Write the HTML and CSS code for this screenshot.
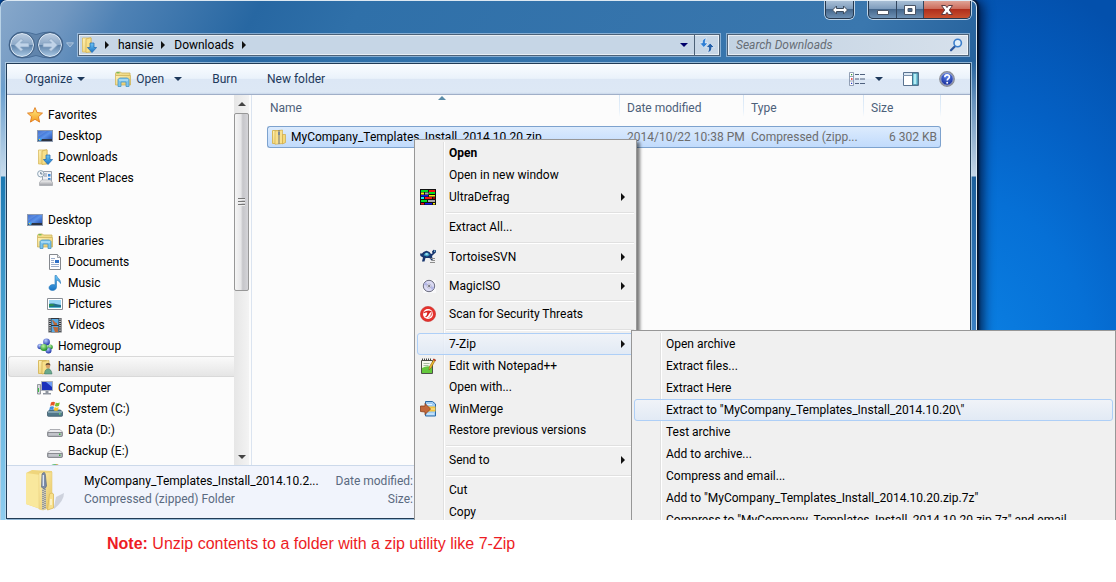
FILE: index.html
```html
<!DOCTYPE html>
<html lang="en">
<head>
<meta charset="utf-8">
<title>Downloads</title>
<link rel="stylesheet" href="styles.css">
</head>
<body>
<svg class="sprite" aria-hidden="true">
  <defs>
    <linearGradient id="gFolder" x1="0" y1="0" x2="1" y2="1"><stop offset="0" stop-color="#fff3b8"/><stop offset="1" stop-color="#e6c35c"/></linearGradient>
    <linearGradient id="gBlue" x1="0" y1="0" x2="0" y2="1"><stop offset="0" stop-color="#6fc6f5"/><stop offset="1" stop-color="#1672c4"/></linearGradient>
    <linearGradient id="gScreen" x1="0" y1="0" x2="1" y2="1"><stop offset="0" stop-color="#1c47b5"/><stop offset=".5" stop-color="#5c93ea"/><stop offset="1" stop-color="#1740a4"/></linearGradient>
    <linearGradient id="gGrey" x1="0" y1="0" x2="0" y2="1"><stop offset="0" stop-color="#fafafa"/><stop offset="1" stop-color="#9a9ca2"/></linearGradient>
    <linearGradient id="gStar" x1="0" y1="0" x2="0" y2="1"><stop offset="0" stop-color="#fff08a"/><stop offset="1" stop-color="#f59a1c"/></linearGradient>
    <linearGradient id="gGlass" x1="0" y1="0" x2="0" y2="1"><stop offset="0" stop-color="#b9cbe0"/><stop offset=".48" stop-color="#8da9c8"/><stop offset=".52" stop-color="#5f83aa"/><stop offset="1" stop-color="#a9c8e4"/></linearGradient>
    <radialGradient id="gHelp" cx=".5" cy=".3" r=".7"><stop offset="0" stop-color="#5c86f0"/><stop offset="1" stop-color="#0c1f8c"/></radialGradient>
    <radialGradient id="gBallB" cx=".4" cy=".3" r=".7"><stop offset="0" stop-color="#b9ccff"/><stop offset="1" stop-color="#1d34a8"/></radialGradient>
    <radialGradient id="gBallG" cx=".4" cy=".3" r=".7"><stop offset="0" stop-color="#baf5a6"/><stop offset="1" stop-color="#178a1c"/></radialGradient>
  </defs>
  <symbol id="star" viewBox="0 0 16 16"><path d="M8 .6l2.100 5 5.400.5-4.100 3.600 1.200 5.400L8 12.300l-4.600 2.800 1.200-5.400L.5 6.100l5.400-.5z" fill="url(#gStar)" stroke="#e07a1e" stroke-width=".9"/></symbol>
  <symbol id="desktop" viewBox="0 0 16 16"><rect x=".5" y="2.500" width="15" height="11" fill="url(#gScreen)" stroke="#8f9bb0"/><path d="M1 11h14v2H1z" fill="#2c3442"/><circle cx="3" cy="11.400" r="1.700" fill="#3fa4ee"/><path d="M2 11h1v1H2z" fill="#f7c84a"/><path d="M1 3l9 0-9 6z" fill="#8db6f5" opacity=".35"/></symbol>
  <symbol id="downloads" viewBox="0 0 16 16"><path d="M1.500 1h8.500v14H1.500z" fill="url(#gFolder)" stroke="#d9bb62" stroke-width=".8"/><path d="M5 2l5-1.300v14L5 15.500z" fill="#f8e08a" stroke="#d0ae4e" stroke-width=".7"/><path d="M9 6h4v4.500h2.600L11 15.600 6.400 10.500H9z" fill="url(#gBlue)" stroke="#1c66ae" stroke-width=".7"/></symbol>
  <symbol id="recent" viewBox="0 0 16 16"><path d="M5.500 1.500h9v11h-9z" fill="#eef1f6" stroke="#9ba1ac"/><path d="M7 4h3M7 6h3" stroke="#8793a8"/><path d="M11 4h2.500v2.500H11zM11 8h2.500v2H11z" fill="#3b86d6"/><path d="M2.500 12.500l2-2.500h9l2 2.500v3h-13z" fill="url(#gGrey)" stroke="#a3a6ac" stroke-width=".7"/><circle cx="3.800" cy="3.800" r="3.200" fill="#f4f7fb" stroke="#8fa4b4"/><path d="M3.800 2v2H5.500" stroke="#3e5873" fill="none" stroke-width=".8"/></symbol>
  <symbol id="library" viewBox="0 0 16 16"><path d="M.5 2.500l1-1.500h4l1 1h8.500v2.500H.5z" fill="#f1dc8c" stroke="#cdb25c" stroke-width=".8"/><path d="M1.500 1.800h3" stroke="#4fb44a"/><path d="M.5 4.500h15V14H.5z" fill="url(#gFolder)" stroke="#d1b65e" stroke-width=".8"/><path d="M3 15.500V8.500L4.500 7h8L14 8.500v7h-3V11H6v4.500z" fill="#7cc4ec" stroke="#4995c4" stroke-width=".8"/><path d="M4 9h9" stroke="#c9ecfb"/></symbol>
  <symbol id="document" viewBox="0 0 16 16"><path d="M2.500.5h8l3 3v12h-11z" fill="#fdfdfe" stroke="#84888e"/><path d="M10.500.5v3h3" fill="#e4e6ea" stroke="#84888e" stroke-width=".8"/><path d="M4 4.500h4M4 6.500h3M4 8.500h3M4 10.500h8M4 12.500h8" stroke="#8298bd" stroke-width=".8"/><path d="M8 6h4v3H8z" fill="#2d6fc6"/></symbol>
  <symbol id="music" viewBox="0 0 16 16"><path d="M8 .5h1.500c.4 2.500 4.500 3.500 4 8-.8-2-2-3-4-3.200V12c0 2-1.800 3.500-4 3.500-2 0-3.500-1-3.500-2.700 0-2 2-3.300 4-3.200.8 0 1.400.1 2 .4z" fill="url(#gBlue)" stroke="#2475b8" stroke-width=".6"/></symbol>
  <symbol id="picture" viewBox="0 0 16 16"><path d="M.5 2.500h15v11H.5z" fill="#fff" stroke="#8a8f96"/><path d="M2 4h12v8H2z" fill="#9bd7f5"/><path d="M2 8c4-1 6 0 12 1v3H2z" fill="#216f8e"/><path d="M2 8.500c3-1 5 0 6 1l-6 1z" fill="#2c8f50"/><path d="M2 11h12v1H2z" fill="#57b8ce"/></symbol>
  <symbol id="video" viewBox="0 0 16 16"><path d="M1.500 1h13v14.500h-13z" fill="#33363c"/><path d="M4.500 2h7v6h-7zM4.500 9h7v6h-7z" fill="#58a9e2"/><path d="M5 3c3 0 2 3 5 3v2H7zM6 10c2-1 4 1 5 0v5H8z" fill="#bb6a3c"/><path d="M3 1.500v14M13 1.500v14" stroke="#f3f3f3" stroke-width="1.300" stroke-dasharray="1.200 1"/></symbol>
  <symbol id="homegroup" viewBox="0 0 16 16"><circle cx="9.500" cy="4" r="3.400" fill="url(#gBallB)"/><circle cx="3.200" cy="8.500" r="2.800" fill="url(#gBallB)"/><circle cx="13.300" cy="9" r="2.500" fill="url(#gBallG)"/><circle cx="11.500" cy="12.500" r="3" fill="url(#gBallB)"/><circle cx="7" cy="9.500" r="3.600" fill="url(#gBallG)"/></symbol>
  <symbol id="user" viewBox="0 0 16 16"><path d="M1.500 1.500h8v13h-8z" fill="url(#gFolder)" stroke="#d9bb62"/><path d="M5 2.500l7-1v12L5 15z" fill="#f8e08a" stroke="#d0ae4e" stroke-width=".7"/><circle cx="11" cy="7" r="2.200" fill="#d9a066"/><path d="M8.500 6.500c0-3.300 5-3.300 5 0-1-1-4-1-5 0z" fill="#5c4632"/><path d="M7.500 15c0-7 7-7 7.500 0z" fill="#6aa98e" stroke="#3a735e" stroke-width=".5"/></symbol>
  <symbol id="computer" viewBox="0 0 16 16"><path d="M.5 4.500h3V14h-3z" fill="#d4d7dc" stroke="#80858d" stroke-width=".8"/><path d="M1.500 8v4" stroke="#3fc244"/><path d="M4.500 1.500h11v9h-11z" fill="#1a31bb" stroke="#a9afb9"/><path d="M9 2h6v5z" fill="#6f9df4"/><path d="M8.500 11h3v2H14v1.500H6V13h2.500z" fill="#8f959f"/></symbol>
  <symbol id="drive" viewBox="0 0 16 16"><path d="M3 7.500h10l2.500 2.500v3.500q0 1-1 1h-13q-1 0-1-1V10z" fill="#ececef" stroke="#9a9ca2" stroke-width=".8"/><path d="M.8 10.500h14.400v3q0 .8-.8.8H1.600q-.8 0-.8-.8z" fill="#c2c4ca" stroke="#74767c" stroke-width=".8"/><path d="M12 11.500h1.500v1.500H12z" fill="#2fae3a"/></symbol>
  <symbol id="sysdrive" viewBox="0 0 16 16"><path d="M2.500 9h11l2 2v3.500q0 .8-.8.8H1.300q-.8 0-.8-.8V11z" fill="#52788a" stroke="#3d5a69" stroke-width=".8"/><path d="M1 11h14" stroke="#b4cfd9"/><path d="M12 12.300h1.500v1.300H12z" fill="#71e867"/><path d="M4 1.500q2-1.500 4-.3L7.200 4.700q-2-1-4 .2z" fill="#e75525"/><path d="M8.800 1.400q2 1.200 4 .2l-.9 3.500q-2 1-4-.2z" fill="#7abf32"/><path d="M3 5.800q2-1.200 4-.1L6.200 9q-2-1-4 .2z" fill="#3f8fe0"/><path d="M7.700 6q2 1.200 4 .2l-.9 3.300q-2 .8-4-.3z" fill="#f6c327"/></symbol>
  <symbol id="disc" viewBox="0 0 16 16"><circle cx="8" cy="7" r="7" fill="#5fc07a"/><path d="M8 7L9 0A7 7 0 0 1 14.500 5z" fill="#f0934e"/></symbol>
  <symbol id="zip" viewBox="0 0 16 16"><path d="M1.500 1.500h9v13h-9z" fill="url(#gFolder)" stroke="#d6b75b"/><path d="M4 2l7.500-1v13.500L4 15.300z" fill="#f9e08b" stroke="#d4b252" stroke-width=".7"/><path d="M11.500 5.500h3v8L11.500 15z" fill="#f5d977" stroke="#cda847" stroke-width=".7"/><path d="M8 1.500v13.500" stroke="#6c727b" stroke-width="2" stroke-dasharray="1 1"/><path d="M7 3h2v3H7z" fill="#7b8898"/></symbol>
</svg>

<main class="desktop">
  <section class="window" aria-label="Downloads">
    <header class="titlebar">
      <button class="cap resize" aria-label="Resize">
        <svg width="18" height="12" viewBox="0 0 18 12"><path d="M1.500 6l4-4v2.500h7V2l4 4-4 4V7.500h-7V10z" fill="#fff" stroke="#3d4c5e"/></svg>
      </button>
      <div class="caps">
        <button class="min" aria-label="Minimize"><svg width="14" height="12" viewBox="0 0 14 12"><path d="M1.500 6.500h11v4h-11z" fill="#fff" stroke="#4a5566"/></svg></button>
        <button class="max" aria-label="Maximize"><svg width="14" height="12" viewBox="0 0 14 12"><path fill-rule="evenodd" d="M1.500 1.500h11v9h-11zM5 4.500v3h4v-3z" fill="#fff" stroke="#4a5566"/></svg></button>
        <button class="close" aria-label="Close"><svg width="14" height="12" viewBox="0 0 14 12"><path d="M1.500 1.500h4L7 3.600l1.500-2.100h4L9.300 6l3.200 4.500h-4L7 8.400l-1.500 2.100h-4L4.700 6z" fill="#fff" stroke="#5b3a40"/></svg></button>
      </div>
    </header>

    <div class="navrow">
      <div class="history">
        <svg class="pill" width="56" height="28" viewBox="0 0 56 28" aria-hidden="true"><path d="M14 1Q21 1 28 3.500 35 1 42 1A13 13 0 0 1 42 27Q35 27 28 24.500 21 27 14 27A13 13 0 0 1 14 1z" fill="#54779c" fill-opacity=".6" stroke="#3b608c" stroke-opacity=".7"/></svg>
        <button aria-label="Back"><svg width="26" height="26" viewBox="0 0 26 26"><circle cx="13" cy="13" r="11.500" fill="url(#gGlass)" stroke="#e1ecf7"/><circle cx="13" cy="13" r="12.500" fill="none" stroke="#3a587b" stroke-width=".8"/><path d="M5.500 13l6.500-6.500 2 2L11.500 11H20v4h-8.500l2.500 2.500-2 2z" fill="#c0d3e8" stroke="#86a3c2" stroke-width=".7"/></svg></button>
        <button aria-label="Forward"><svg width="26" height="26" viewBox="0 0 26 26"><circle cx="13" cy="13" r="11.500" fill="url(#gGlass)" stroke="#e1ecf7"/><circle cx="13" cy="13" r="12.500" fill="none" stroke="#3a587b" stroke-width=".8"/><path d="M20.500 13L14 6.500l-2 2 2.500 2.500H6v4h8.500L12 17.500l2 2z" fill="#c0d3e8" stroke="#86a3c2" stroke-width=".7"/></svg></button>
      </div>
      <button class="recentbtn" aria-label="Recent pages"><svg width="8" height="6" viewBox="0 0 8 6"><path d="M.5.800h7L4 5z" fill="#7f9fc4" stroke="#bdd2e8" stroke-width=".7"/></svg></button>
      <div class="address">
        <svg class="ic" width="16" height="16"><use href="#downloads"/></svg>
        <i class="tri"></i><button class="crumb">hansie</button>
        <i class="tri"></i><button class="crumb">Downloads</button><i class="tri"></i>
        <button class="drop" aria-label="Previous locations"><i class="tridown navy"></i></button>
        <button class="refresh" aria-label="Refresh"><svg width="16" height="16" viewBox="0 0 16 16"><path d="M7.500 1C4 1.500 3.300 3.500 3.300 6H.6l4.200 4.500L9 6H6.300C6.300 4 6.500 2.500 7.500 1z" fill="#2f7fd4" stroke="#eef5fc" stroke-width=".7"/><path d="M8.500 15.500c3.500-.5 4.200-2.500 4.200-5h2.700L11.200 6 7 10.500h2.700c0 2-.2 3.500-1.200 5z" fill="#235fa8" stroke="#eef5fc" stroke-width=".7"/></svg></button>
      </div>
      <label class="search"><input type="search" placeholder="Search Downloads" aria-label="Search Downloads"><svg width="14" height="14" viewBox="0 0 14 14"><path d="M6 8.200L2 12.300" stroke="#2b569c" stroke-width="2.200" stroke-linecap="round"/><circle cx="8.700" cy="5" r="3.700" fill="#e2f0fa" stroke="#3b7ecb" stroke-width="1.600"/></svg></label>
    </div>

    <div class="content">
      <div class="toolbar">
        <button>Organize <i class="tridown"></i></button>
        <button class="open"><svg width="16" height="16"><use href="#library"/></svg>Open <i class="tridown far"></i></button>
        <button>Burn</button>
        <button>New folder</button>
        <div class="tools">
          <button class="view" aria-label="Change view"><svg width="16" height="14" viewBox="0 0 16 14"><path d="M.5.500h4v13h-4zM.5 4.500h4M.5 9h4" fill="#fff" stroke="#7b8ca4" stroke-width=".8"/><path d="M6 2.500h4M11 2.500h5M6 7h4M11 7h5M6 11.500h4M11 11.500h5" stroke="#50627f"/><path d="M2 2h1.200v1.200H2z" fill="#393"/><path d="M2 6.200h1.500v1.500H2z" fill="#d22"/><path d="M2 10.700h1.200v1.200H2z" fill="#23c"/></svg><i class="tridown"></i></button>
          <button aria-label="Preview pane"><svg width="16" height="14" viewBox="0 0 16 14"><path d="M.5.500h15v13H.5z" fill="#fff" stroke="#5a7390"/><path d="M1 1h14v2H1z" fill="#dbe8f4"/><path d="M0 3.500h9" stroke="#7d93ad"/><path d="M9.500 1h5.500v12H9.500z" fill="#75c9dd" stroke="#44748f"/><path d="M11 2h2v10h-2z" fill="#b7ecf4"/></svg></button>
          <button aria-label="Help"><svg width="16" height="16" viewBox="0 0 16 16"><circle cx="8" cy="8" r="7.200" fill="url(#gHelp)" stroke="#8c8f96" stroke-width="1.400"/><circle cx="8" cy="8" r="6.200" fill="none" stroke="#d6dae4" stroke-width=".6"/><path d="M5.800 6.200C5.800 3 10.400 3.200 10.400 6c0 1.700-2.200 1.700-2.200 3.600" fill="none" stroke="#fff" stroke-width="1.600"/><circle cx="8.200" cy="11.700" r="1" fill="#fff"/></svg></button>
        </div>
      </div>

      <div class="panes">
        <nav class="tree">
          <a href="#" class="l0"><svg><use href="#star"/></svg>Favorites</a>
          <a href="#" class="l1"><svg><use href="#desktop"/></svg>Desktop</a>
          <a href="#" class="l1"><svg><use href="#downloads"/></svg>Downloads</a>
          <a href="#" class="l1 group-end"><svg><use href="#recent"/></svg>Recent Places</a>
          <a href="#" class="l0"><svg><use href="#desktop"/></svg>Desktop</a>
          <a href="#" class="l1"><svg><use href="#library"/></svg>Libraries</a>
          <a href="#" class="l2"><svg><use href="#document"/></svg>Documents</a>
          <a href="#" class="l2"><svg><use href="#music"/></svg>Music</a>
          <a href="#" class="l2"><svg><use href="#picture"/></svg>Pictures</a>
          <a href="#" class="l2"><svg><use href="#video"/></svg>Videos</a>
          <a href="#" class="l1"><svg><use href="#homegroup"/></svg>Homegroup</a>
          <a href="#" class="l1 current"><svg><use href="#user"/></svg>hansie</a>
          <a href="#" class="l1"><svg><use href="#computer"/></svg>Computer</a>
          <a href="#" class="l2"><svg><use href="#sysdrive"/></svg>System (C:)</a>
          <a href="#" class="l2"><svg><use href="#drive"/></svg>Data (D:)</a>
          <a href="#" class="l2"><svg><use href="#drive"/></svg>Backup (E:)</a>
          <a href="#" class="l2" aria-label="Disc drive"><svg><use href="#disc"/></svg></a>
        </nav>
        <div class="scroll" aria-hidden="true">
          <i class="up"></i>
          <div class="thumb"><i></i><i></i><i></i></div>
          <i class="down"></i>
        </div>
        <div class="files">
          <svg class="sort" width="8" height="4" viewBox="0 0 8 4"><path d="M0 4l4-4 4 4z" fill="#5b8ca8"/></svg>
          <table>
            <colgroup><col><col class="c-date"><col class="c-type"><col class="c-size"></colgroup>
            <thead><tr><th>Name</th><th>Date modified</th><th>Type</th><th>Size</th></tr></thead>
            <tbody><tr>
              <td class="name"><svg width="16" height="16"><use href="#zip"/></svg>MyCompany_Templates_Install_2014.10.20.zip</td>
              <td>2014/10/22 10:38 PM</td><td>Compressed (zipp...</td><td class="num">6 302 KB</td>
            </tr></tbody>
          </table>
        </div>
      </div>

      <footer class="details">
        <svg class="bigzip" width="44" height="44" viewBox="0 0 44 44"><path d="M28 38L30 28 38 24q0 8-10 16z" fill="#8b93a2" opacity=".35"/><path d="M0 4l6-3 20 1v36l-9 3-17-6z" fill="#efd57c"/><path d="M0 4l15 2v34L0 35z" fill="#f9e89d"/><path d="M13 4l13-1v35l-9 3-4-1z" fill="url(#gFolder)" stroke="#e8cf79" stroke-width=".6"/><path d="M23.500 25q3-2 4 0v14l-6 2z" fill="#f8e08b" stroke="#d9b95a" stroke-width=".8"/><path d="M25 30v6" stroke="#fff8d6" stroke-width="1.500"/><path d="M16 20l4-1v21l-4 1z" fill="#cdc9b2"/><path d="M17 21v19M19 20v20" stroke="#7c8088" stroke-width="1.300" stroke-dasharray="1 1"/><path d="M16 5q3-4 3.500 2l1 10q-2 5-5 1z" fill="#7c8ba6" stroke="#5f6b80" stroke-width=".7"/><path d="M17.300 6v11" stroke="#e4ebf5" stroke-width="1.300"/></svg>
        <div class="meta">
          <div class="fname">MyCompany_Templates_Install_2014.10.2...</div>
          <div>Compressed (zipped) Folder</div>
        </div>
        <div class="labels"><div>Date modified:</div><div>Size:</div></div>
      </footer>
    </div>
  </section>

  <div class="menu main-menu" role="menu">
    <button role="menuitem" class="bold">Open</button>
    <button role="menuitem">Open in new window</button>
    <button role="menuitem"><svg viewBox="0 0 16 16"><path d="M0 0h16v16H0z" fill="#111"/><path d="M1 1h7v2H1zM9 3h6v2H9zM1 11h6v2H1z" fill="#0d2"/><path d="M9 1h6v2H9zM5 8h7v2H5zM1 14h3v1.500H1z" fill="#e11"/><path d="M1 3.500h3v2H1zM9 6h6v1.500H9zM13 14h2v1.500h-2z" fill="#fe1"/><path d="M5 3.500h3.500v2H5zM8 11h7v2H8z" fill="#aaa"/><path d="M1 6h7v1.500H1zM5 14h7v1.500H5z" fill="#11e"/><path d="M1 8h3v2H1z" fill="#1ee"/><path d="M13 8h2v2h-2z" fill="#900"/></svg>UltraDefrag<i class="tri"></i></button>
    <hr>
    <button role="menuitem">Extract All...</button>
    <hr>
    <button role="menuitem"><svg viewBox="0 0 16 16"><path d="M0 4.500h2L3.500 3l3-1.200L9.500 3l1.500 2 1.500-.5-.5-2L13.500.800l2.500.4v2L13.500 5.500 12 7l.8 3.500-1.300 1L9.500 9H5.500l-1 3.500H2L3 8.500.5 7z" fill="#17356e"/><path d="M3.500 6.200Q6.500 1 9.800 6L7 7.500z" fill="#3d9ec8"/><path d="M5.500 4.200h2.200v1.600H5.500z" fill="#b5ecf3"/><path d="M14 1.600h1.200v1.200H14z" fill="#8fd5ee"/><path d="M10.500 9.500H15M11.500 11.500H15M10 13.500h5" stroke="#8d8d8d"/></svg>TortoiseSVN<i class="tri"></i></button>
    <hr>
    <button role="menuitem" class="slim"><svg viewBox="0 0 16 16"><path d="M3 2h13v13H3z" fill="#f8f8fa"/><circle cx="9" cy="8" r="5.700" fill="#d9d9f2" stroke="#5d6072" stroke-width=".9"/><path d="M9 8L5.500 3.800 3.800 7zM9 8l3.500 4.200 1.700-3.200z" fill="#b3b6e6"/><circle cx="9" cy="8" r="2" fill="#fff" stroke="#9d9dbb" stroke-width=".7"/><path d="M8.300 7.300h1.500v1.500H8.300z" fill="#223"/></svg>MagicISO<i class="tri"></i></button>
    <hr>
    <button role="menuitem" class="short"><svg viewBox="0 0 16 16"><circle cx="8" cy="8" r="7.600" fill="#e5322d" stroke="#c42a26" stroke-width=".6"/><circle cx="8" cy="8" r="5" fill="#fff"/><path d="M3.500 6.200Q8 3 12 5.500 10 6 9 8 7.500 12.500 4.500 10.800 7 10.500 7.300 6.500 5.500 6 3.500 7.500z" fill="#d9201d"/><path d="M12.500 5.500q.5 5-5 7 3.500-2.500 3.800-6z" fill="#e5322d" opacity=".7"/></svg>Scan for Security Threats</button>
    <hr>
    <button role="menuitem" class="hot">7-Zip<i class="tri"></i></button>
    <button role="menuitem"><svg viewBox="0 0 16 16"><path d="M1.500 2.500h11v13h-11z" fill="#f7f9ee" stroke="#4d5149"/><path d="M2 10q5-3 10-1v6H2z" fill="#64c83c"/><path d="M3.500 5.500h6M3.500 7.500h5" stroke="#a7bda0"/><path d="M2 1.500h10" stroke="#444" stroke-width="2" stroke-dasharray="1 1"/><path d="M14 1l1.500 1L11 10l-2 2 .3-3z" fill="#f2c12e" stroke="#8b5a1d" stroke-width=".6"/><path d="M13.500.500L16 2l-.8 1.300-2.400-1.500z" fill="#b43428"/></svg>Edit with Notepad++</button>
    <button role="menuitem" class="short">Open with...</button>
    <button role="menuitem"><svg viewBox="0 0 16 16"><path d="M5.500.500h7l3 2.500v12H5.500z" fill="#9fcdf3" stroke="#2b6ba8"/><path d="M7 3.500h5M7 13h7" stroke="#e6f4ff"/><path d="M8 5.500h7.500v5H8z" fill="#f5c33a"/><path d="M9 8h6" stroke="#fae79c"/><path d="M.5 5H5V2.500L10.500 8 5 13.500V11L.5 10.500z" fill="#c2683c" stroke="#8a401c" stroke-width=".8"/></svg>WinMerge</button>
    <button role="menuitem" class="short">Restore previous versions</button>
    <hr>
    <button role="menuitem">Send to<i class="tri"></i></button>
    <hr>
    <button role="menuitem">Cut</button>
    <button role="menuitem">Copy</button>
  </div>

  <div class="menu sub-menu" role="menu">
    <button role="menuitem">Open archive</button>
    <button role="menuitem">Extract files...</button>
    <button role="menuitem">Extract Here</button>
    <button role="menuitem" class="hot">Extract to "MyCompany_Templates_Install_2014.10.20\"</button>
    <button role="menuitem">Test archive</button>
    <button role="menuitem">Add to archive...</button>
    <button role="menuitem">Compress and email...</button>
    <button role="menuitem">Add to "MyCompany_Templates_Install_2014.10.20.zip.7z"</button>
    <button role="menuitem">Compress to "MyCompany_Templates_Install_2014.10.20.zip.7z" and email</button>
  </div>
</main>

<p class="note"><strong>Note:</strong> Unzip contents to a folder with a zip utility like 7-Zip</p>
</body>
</html>
```
FILE: styles.css
```css
* { box-sizing: border-box; }

body {
  margin: 0;
  height: 100vh;
  display: flex;
  flex-direction: column;
  background: #fff;
  color: #000;
  font: 12px/16px Roboto, "Open Sans", sans-serif;
}

button {
  border: 0;
  padding: 0;
  background: none;
  color: inherit;
  font: inherit;
  text-align: left;
  white-space: nowrap;
}

svg { flex: none; display: block; }
.sprite { position: absolute; width: 0; height: 0; }

.desktop {
  position: relative;
  flex: 1;
  min-height: 0;
  overflow: hidden;
  display: flex;
  background: radial-gradient(ellipse 300px 420px at 86% 74%, #0c84e6 0%, #0670d6 45%, #0460c4 70%, #0350ac 100%);
}

/* Explorer window */
.window {
  flex: 1;
  margin-right: 139px;
  min-width: 0;
  display: flex;
  flex-direction: column;
  padding: 0 5px 1px;
  border: 1px solid #dce8f2;
  border-left-color: #b8d2e6;
  border-bottom: 0;
  border-radius: 7px 7px 0 0;
  box-shadow: 1px 0 2px 1px #04142c, 4px 2px 12px 2px rgba(0, 10, 40, .8);
  background:
    linear-gradient(180deg, transparent 60px, #6ba0cf 90px, #c9dcec 175px, #1c79b2 176px, #55acd8 340px, #8fcdf0 100%) left / 6px 100% no-repeat,
    linear-gradient(180deg, transparent 60px, #6792bd 100px, #c4d5e6 175px, #1c5f9c 176px, #3c82c6 340px, #8fcdf0 100%) right / 6px 100% no-repeat,
    linear-gradient(118deg, #87a8cb 0, #7298c1 60px, #4f82b5 110px, #2767a2 230px, #2f70a9 320px, #3a77ae 70%, #235f9a 82%, #6a91ba 90%, #7e9dbf 100%);
}

.titlebar { display: flex; justify-content: flex-end; gap: 14px; height: 32px; }
.titlebar button { display: flex; align-items: center; justify-content: center; height: 17px; }
.resize, .caps {
  height: 18px;
  border: 1px solid #26384e;
  border-top: 0;
  border-radius: 0 0 5px 5px;
  box-shadow: 0 0 0 1px rgba(225, 236, 246, .8);
  overflow: hidden;
  background: linear-gradient(#a9bfd6, #7f9dbd 45%, #45678c 50%, #6d91b5);
}
.titlebar .resize { width: 29px; height: 18px; }
.caps { display: flex; }
.min { width: 28px; border-right: 1px solid #33475f; }
.max { width: 27px; border-right: 1px solid #33475f; }
.close { width: 46px; background: linear-gradient(#dfa396, #cd6d5c 45%, #b02f1c 50%, #c8512f); }

.navrow { display: flex; align-items: center; height: 24px; margin-bottom: 6px; padding: 0 2px 0 3px; }
.history { position: relative; display: flex; gap: 2px; }
.history button { position: relative; }
.pill { position: absolute; left: -1px; top: -1px; }
.recentbtn { padding: 0 4px 0 3px; }
.address, .search {
  display: flex;
  align-items: center;
  height: 22px;
  border: 1px solid #4d6278;
  box-shadow: 0 0 0 1px rgba(190, 214, 236, .6), inset 0 0 0 1px rgba(255, 255, 255, .6);
  background: #c6d6e6;
}
.address { flex: 1; padding-left: 2px; }
.address .tri { margin: 0 9px 0 8px; }
.address .drop { margin-left: auto; padding: 0 6px; }
.refresh { height: 20px; padding: 0 4px; border-left: 1px solid #4d6278; }
.search { width: 242px; margin-left: 7px; padding: 0 5px 0 8px; background: linear-gradient(90deg, #c3d3e3, #d6e0eb); }
.search input {
  flex: 1;
  min-width: 0;
  border: 0;
  padding: 0;
  outline: 0;
  background: none;
  font: inherit;
}
.search input::placeholder { color: #666d75; font-style: italic; opacity: 1; }

.tri { flex: none; width: 0; height: 0; border: 4px solid transparent; border-left-color: #111; border-right: 0; }
.tridown { display: block; flex: none; width: 0; height: 0; border: 4px solid transparent; border-top-color: #1e395b; border-bottom: 0; }
.navy { border-top-color: #00006a; }

.content {
  flex: 1;
  min-height: 0;
  display: flex;
  flex-direction: column;
  border: 1px solid #223c56;
  box-shadow: 0 0 0 1px rgba(200, 222, 240, .65);
  background: #fcfcfc;
}

.toolbar {
  display: flex;
  align-items: center;
  gap: 30px;
  height: 31px;
  padding: 0 15px 0 18px;
  border-bottom: 1px solid #a0afc8;
  background: linear-gradient(#fafdff, #eaf2fb 48%, #dce7f5 50%, #dde8f5 94%, #c9d7ea);
  color: #1e395b;
}
.toolbar button { display: flex; align-items: center; gap: 5px; }
.toolbar .far { margin-left: 5px; }
.tools { display: flex; align-items: center; gap: 20px; margin-left: auto; }
.toolbar .view { gap: 10px; }

.panes { flex: 1; min-height: 0; display: flex; }

.tree { width: 227px; padding-top: 9px; overflow: hidden; }
.tree a {
  display: flex;
  align-items: center;
  gap: 5px;
  height: 21px;
  margin: 0 1px;
  border: 1px solid transparent;
  color: #000;
  text-decoration: none;
}
.tree svg { width: 16px; height: 16px; }
.tree .l0 { padding-left: 18px; }
.tree .l1 { padding-left: 28px; }
.tree .l2 { padding-left: 38px; }
.tree .group-end { margin-bottom: 21px; }
.tree .current {
  border-color: #d9d9d9;
  border-right: 0;
  border-radius: 3px 0 0 3px;
  margin-right: 0;
  background: linear-gradient(#fafafa, #e5e5e5);
}

.scroll {
  display: flex;
  flex-direction: column;
  align-items: center;
  width: 15px;
  background: linear-gradient(90deg, #e6e6e6, #f3f3f3);
}
.up, .down { width: 0; height: 0; border: 4px solid transparent; }
.up { margin: 7px 0 7px; border-bottom-color: #444; border-top: 0; }
.down { margin: auto 0 6px; border-top-color: #444; border-bottom: 0; }
.thumb {
  display: flex;
  flex-direction: column;
  align-items: center;
  justify-content: center;
  gap: 1px;
  width: 15px;
  height: 178px;
  border: 1px solid #979797;
  border-radius: 2px;
  background: linear-gradient(90deg, #f5f5f5, #e6e6e8 45%, #c6c6ca 60%, #d4d4d8);
}
.thumb i { width: 7px; height: 2px; background: #777; border-bottom: 1px solid #eee; }

.files {
  position: relative;
  flex: 1;
  min-width: 0;
  margin-left: 2px;
  padding: 0 29px 0 15px;
  border-left: 1px solid #dbe4f0;
}
.sort { position: absolute; left: 186px; top: 1px; }
table { width: 100%; table-layout: fixed; border-collapse: separate; border-spacing: 0; }
.c-date { width: 124px; }
.c-type { width: 120px; }
.c-size { width: 77px; }
th {
  height: 31px;
  padding: 0 7px 5px;
  background: linear-gradient(#d5e5f5, #e6f0fa 70%, #fcfcfc) right top / 1px 22px no-repeat;
  color: #4c607a;
  font-weight: 400;
  text-align: left;
}
th:first-child { padding-left: 3px; }
td {
  height: 22px;
  padding: 0 7px;
  border: 1px solid #7da2ce;
  border-width: 1px 0;
  background: linear-gradient(#dcebfd, #c1dbfc);
  color: #6d6d6d;
  white-space: nowrap;
}
td:first-child { padding-left: 3px; border-left-width: 1px; border-radius: 3px 0 0 3px; }
td:last-child { padding-right: 3px; border-right-width: 1px; border-radius: 0 3px 3px 0; }
td.num { text-align: right; }
td.name { color: #000; }
td.name svg { display: inline-block; margin-right: 4px; vertical-align: middle; }

.details {
  display: flex;
  align-items: flex-start;
  height: 53px;
  padding: 3px 0 0 19px;
  border-top: 1px solid #ccd9ea;
  background: #f1f4fc;
  color: #5a6a80;
  line-height: 18px;
}
.meta { width: 246px; margin-left: 14px; padding-top: 3px; white-space: nowrap; }
.fname { color: #000; }
.labels { width: 83px; padding-top: 3px; text-align: right; white-space: nowrap; }

/* Pop-up menus */
.menu {
  position: absolute;
  display: flex;
  flex-direction: column;
  padding: 2px;
  border: 1px solid #979797;
  background:
    linear-gradient(90deg, #e0e0e0 50%, #fff 50%) 28px 2px / 2px 100% no-repeat,
    #f0f0f0;
}
.main-menu { left: 414px; top: 139px; width: 223px; box-shadow: 3px 3px 3px rgba(0, 0, 0, .5); }
.sub-menu { right: 0; top: 330px; width: 485px; }
.menu button {
  position: relative;
  display: flex;
  align-items: center;
  justify-content: space-between;
  height: 22px;
  padding: 0 8px 0 31px;
  border: 1px solid transparent;
  border-radius: 3px;
}
.menu .short { height: 21px; padding-bottom: 1px; }
.menu .slim { height: 20px; }
.menu .bold { font-weight: 700; }
.menu .hot { border-color: #aecff7; background: linear-gradient(rgba(240, 244, 250, .8), rgba(222, 232, 246, .8)); }
.menu svg { position: absolute; left: 2px; width: 16px; height: 16px; }
.menu hr {
  width: calc(100% - 29px);
  height: 2px;
  margin: 4px 0 2px 29px;
  border: 0;
  border-top: 1px solid #e0e0e0;
  border-bottom: 1px solid #fff;
}

.note {
  margin: 0;
  padding: 14px 107px 28px;
  color: #ed1c24;
  font: 16px/20px "Liberation Sans", Arial, sans-serif;
}
```
